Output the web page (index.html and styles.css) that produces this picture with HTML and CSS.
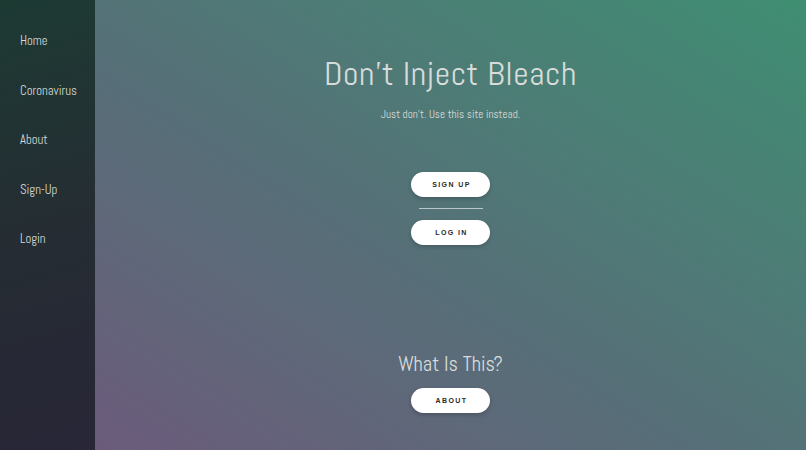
FILE: index.html
```html
<!DOCTYPE html>
<html lang="en">
<head>
<meta charset="utf-8">
<title>Don't Inject Bleach</title>
<link rel="stylesheet" href="styles.css">
</head>
<body>
<div class="page">
  <nav class="sidebar">
    <a href="#">Home</a>
    <a href="#">Coronavirus</a>
    <a href="#">About</a>
    <a href="#">Sign-Up</a>
    <a href="#">Login</a>
  </nav>
  <main class="main">
    <section class="hero">
      <h1 class="title">Don’t Inject Bleach</h1>
      <p class="subtitle">Just don't. Use this site instead.</p>
      <div class="actions">
        <button class="pill">SIGN UP</button>
        <hr class="divider">
        <button class="pill">LOG IN</button>
      </div>
    </section>
    <section class="info">
      <h2 class="info-title">What Is This?</h2>
      <button class="pill">ABOUT</button>
    </section>
  </main>
</div>
</body>
</html>
```
FILE: styles.css
```css
html, body {
  margin: 0;
  height: 100%;
}
body {
  font-family: "Abel", "DejaVu Sans Condensed", "Liberation Sans Narrow", "DejaVu Sans", sans-serif;
}
.page {
  display: flex;
  height: 450px;
  overflow: hidden;
}
.sidebar {
  width: 95px;
  flex: none;
  background: linear-gradient(165deg, #1d3a33 0%, #252d33 50%, #282637 100%);
  display: flex;
  flex-direction: column;
  gap: 31.5px;
  padding: 32px 0 0 20px;
  box-sizing: border-box;
}
.sidebar a {
  color: #d6dad9;
  text-decoration: none;
  font-size: 12.8px;
  line-height: 18px;
}
.main {
  flex: 1;
  background: linear-gradient(to top right, #6b5b7b 0%, #567078 45%, #3f8e72 100%);
  display: flex;
  flex-direction: column;
  align-items: center;
  color: #d7dcdb;
}
.hero {
  display: flex;
  flex-direction: column;
  align-items: center;
  padding-top: 54px;
}
.title {
  margin: 0;
  font-weight: normal;
  font-size: 34px;
  line-height: 40px;
  letter-spacing: 0.5px;
}
.subtitle {
  margin: 13px 0 0;
  font-size: 11.2px;
  line-height: 14px;
}
.actions {
  margin-top: 51px;
  display: flex;
  flex-direction: column;
  align-items: center;
}
.pill {
  width: 79px;
  height: 25px;
  border: none;
  border-radius: 13px;
  background: #ffffff;
  color: #2a2a2a;
  font-family: "Liberation Sans", Arial, sans-serif;
  font-weight: bold;
  font-size: 7px;
  letter-spacing: 1.4px;
  padding: 0 0 0 2px;
  box-shadow: 0 2px 4px rgba(0,0,0,0.2);
}
.divider {
  width: 64px;
  border: none;
  border-top: 1px solid rgba(230,235,235,0.7);
  margin: 11px 0 11px;
}
.info {
  margin-top: 107px;
  display: flex;
  flex-direction: column;
  align-items: center;
}
.info-title {
  margin: 0 0 12px;
  font-weight: normal;
  font-size: 20.5px;
  line-height: 24px;
}
```
